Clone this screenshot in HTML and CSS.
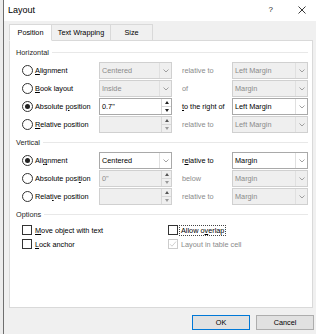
FILE: index.html
```html
<!DOCTYPE html>
<html lang="en">
<head>
    <meta charset="UTF-8">
    <meta name="viewport" content="width=device-width, initial-scale=1.0">
    <title>Layout</title>
    <link rel="stylesheet" href="styles.css">
</head>
<body>

    <div class="dialog">
        <div class="titlebar">
            <span class="title">Layout</span>
            <span class="help">?</span>
            <span class="close">
                <svg width="8" height="8" viewBox="0 0 8 8"><path d="M0.5 0.5 L7.5 7.5 M7.5 0.5 L0.5 7.5" stroke="#222" stroke-width="0.9" fill="none"/></svg>
            </span>
        </div>

        <div class="tabs">
            <span class="tab active">Position</span>
            <span class="tab wrap">Text Wrapping</span>
            <span class="tab size">Size</span>
        </div>

        <div class="panel">
            <div class="group-label">Horizontal</div>
            <div class="rows">
                <div class="row">
                    <div class="option"><span class="radio"></span><span><u>A</u>lignment</span></div>
                    <div class="combo disabled"><span class="value">Centered</span><span class="arrow"><svg width="6" height="4" viewBox="0 0 6 4"><path d="M0.5 0.5 L3 3 L5.5 0.5" stroke="#8a8a8a" stroke-width="0.8" fill="none"/></svg></span></div>
                    <span class="mid muted">relative to</span>
                    <div class="combo disabled"><span class="value">Left Margin</span><span class="arrow"><svg width="6" height="4" viewBox="0 0 6 4"><path d="M0.5 0.5 L3 3 L5.5 0.5" stroke="#8a8a8a" stroke-width="0.8" fill="none"/></svg></span></div>
                </div>
                <div class="row">
                    <div class="option"><span class="radio"></span><span><u>B</u>ook layout</span></div>
                    <div class="combo disabled"><span class="value">Inside</span><span class="arrow"><svg width="6" height="4" viewBox="0 0 6 4"><path d="M0.5 0.5 L3 3 L5.5 0.5" stroke="#8a8a8a" stroke-width="0.8" fill="none"/></svg></span></div>
                    <span class="mid muted">of</span>
                    <div class="combo disabled"><span class="value">Margin</span><span class="arrow"><svg width="6" height="4" viewBox="0 0 6 4"><path d="M0.5 0.5 L3 3 L5.5 0.5" stroke="#8a8a8a" stroke-width="0.8" fill="none"/></svg></span></div>
                </div>
                <div class="row">
                    <div class="option"><span class="radio checked"></span><span>Absolute <u>p</u>osition</span></div>
                    <div class="spin"><span class="value">0.7"</span><span class="spin-btns"><span class="up"></span><span class="down"></span></span></div>
                    <span class="mid"><u>t</u>o the right of</span>
                    <div class="combo"><span class="value">Left Margin</span><span class="arrow"><svg width="6" height="4" viewBox="0 0 6 4"><path d="M0.5 0.5 L3 3 L5.5 0.5" stroke="#8a8a8a" stroke-width="0.8" fill="none"/></svg></span></div>
                </div>
                <div class="row">
                    <div class="option"><span class="radio"></span><span><u>R</u>elative position</span></div>
                    <div class="spin disabled"><span class="value"></span><span class="spin-btns"><span class="up"></span><span class="down"></span></span></div>
                    <span class="mid muted">relative to</span>
                    <div class="combo disabled"><span class="value">Left Margin</span><span class="arrow"><svg width="6" height="4" viewBox="0 0 6 4"><path d="M0.5 0.5 L3 3 L5.5 0.5" stroke="#8a8a8a" stroke-width="0.8" fill="none"/></svg></span></div>
                </div>
            </div>

            <div class="group-label">Vertical</div>
            <div class="rows">
                <div class="row">
                    <div class="option"><span class="radio checked"></span><span>Ali<u>g</u>nment</span></div>
                    <div class="combo"><span class="value">Centered</span><span class="arrow"><svg width="6" height="4" viewBox="0 0 6 4"><path d="M0.5 0.5 L3 3 L5.5 0.5" stroke="#8a8a8a" stroke-width="0.8" fill="none"/></svg></span></div>
                    <span class="mid">r<u>e</u>lative to</span>
                    <div class="combo"><span class="value">Margin</span><span class="arrow"><svg width="6" height="4" viewBox="0 0 6 4"><path d="M0.5 0.5 L3 3 L5.5 0.5" stroke="#8a8a8a" stroke-width="0.8" fill="none"/></svg></span></div>
                </div>
                <div class="row">
                    <div class="option"><span class="radio"></span><span>Absolute posi<u>t</u>ion</span></div>
                    <div class="spin disabled"><span class="value">0"</span><span class="spin-btns"><span class="up"></span><span class="down"></span></span></div>
                    <span class="mid muted">below</span>
                    <div class="combo disabled"><span class="value">Margin</span><span class="arrow"><svg width="6" height="4" viewBox="0 0 6 4"><path d="M0.5 0.5 L3 3 L5.5 0.5" stroke="#8a8a8a" stroke-width="0.8" fill="none"/></svg></span></div>
                </div>
                <div class="row">
                    <div class="option"><span class="radio"></span><span>Relat<u>i</u>ve position</span></div>
                    <div class="spin disabled"><span class="value"></span><span class="spin-btns"><span class="up"></span><span class="down"></span></span></div>
                    <span class="mid muted">relative to</span>
                    <div class="combo disabled"><span class="value">Margin</span><span class="arrow"><svg width="6" height="4" viewBox="0 0 6 4"><path d="M0.5 0.5 L3 3 L5.5 0.5" stroke="#8a8a8a" stroke-width="0.8" fill="none"/></svg></span></div>
                </div>
            </div>

            <div class="group-label options-label">Options</div>
            <div class="checks">
                <div class="check-item"><span class="box"></span><span><u>M</u>ove object with text</span></div>
                <div class="check-item"><span class="box"></span><span class="focus">Allow o<u>v</u>erlap</span></div>
                <div class="check-item"><span class="box"></span><span><u>L</u>ock anchor</span></div>
                <div class="check-item muted"><span class="box disabled"><svg width="8" height="8" viewBox="0 0 8 8"><path d="M1 4.2 L3 6.2 L7 1.6" stroke="#c4c4c4" stroke-width="0.8" fill="none"/></svg></span><span>Layout in table cell</span></div>
            </div>
        </div>

        <div class="buttons">
            <span class="btn default">OK</span>
            <span class="btn">Cancel</span>
        </div>
    </div>

</body>
</html>
```

FILE: styles.css
```css
html, body {
    margin: 0;
    padding: 0;
    height: 100%;
    overflow: hidden;
}

body {
    background: #ececec;
    font-family: "Liberation Sans", Arial, sans-serif;
    font-size: 7.3px;
    color: #000;
}

.dialog {
    margin-left: 3px;
    height: 100%;
    border-left: 1px solid #6f6f6f;
    background: #f0f0f0;
}

.titlebar {
    height: 21px;
    background: #fff;
    display: flex;
    align-items: center;
    padding: 0 10px 0 4px;
}

.title {
    flex: 1;
    font-size: 9px;
    margin-top: -2px;
}

.help {
    font-size: 8px;
    color: #222;
    margin-right: 25px;
    margin-top: -2px;
}

.close {
    display: flex;
    margin-top: -2px;
}

.tabs {
    display: flex;
    margin: 3px 0 -1px 5px;
    position: relative;
    z-index: 1;
}

.tab {
    box-sizing: border-box;
    height: 17px;
    line-height: 16px;
    padding: 0;
    border: 1px solid #d9d9d9;
    border-left: none;
    text-align: center;
    white-space: nowrap;
    background: #f0f0f0;
}

.tab.active {
    background: #fff;
    border-left: 1px solid #d9d9d9;
    border-bottom-color: #fff;
    width: 43px;
}

.tab.wrap {
    width: 59px;
}

.tab.size {
    width: 42px;
}

.panel {
    box-sizing: border-box;
    margin-left: 5px;
    width: 304px;
    height: 268px;
    background: #fff;
    border: 1px solid #d9d9d9;
    padding: 6px 4px 0 6px;
}

.group-label {
    display: flex;
    align-items: center;
    height: 11px;
    margin-bottom: 4px;
    color: #1e1e1e;
}

.group-label::after {
    content: "";
    flex: 1;
    height: 1px;
    background: #e8e8e8;
    margin-left: 3px;
}

.rows {
    display: flex;
    flex-direction: column;
    gap: 1px;
    margin-left: 6px;
    margin-bottom: 4px;
}

.row {
    display: grid;
    grid-template-columns: 77px 73px 60px 76px;
    height: 17px;
    align-items: center;
}

.option {
    display: flex;
    align-items: center;
    white-space: nowrap;
}

.radio {
    box-sizing: border-box;
    width: 11px;
    height: 11px;
    border: 1px solid #333;
    border-radius: 50%;
    margin-right: 2px;
    display: flex;
    align-items: center;
    justify-content: center;
}

.radio.checked::after {
    content: "";
    width: 5px;
    height: 5px;
    border-radius: 50%;
    background: #222;
}

.combo, .spin {
    box-sizing: border-box;
    height: 17px;
    display: flex;
    border: 1px solid #a9a9a9;
    background: #fff;
}

.combo.disabled, .spin.disabled {
    border-color: #d0d0d0;
    background: #efefef;
    color: #8a8a8a;
}

.value {
    flex: 1;
    padding-left: 2px;
    line-height: 15px;
    white-space: nowrap;
    overflow: hidden;
}

.arrow {
    width: 11px;
    border-left: 1px solid #e0e0e0;
    display: flex;
    align-items: center;
    justify-content: center;
}

.spin-btns {
    width: 9px;
    border-left: 1px solid #d8d8d8;
    display: flex;
    flex-direction: column;
}

.spin-btns span {
    flex: 1;
    display: flex;
    align-items: center;
    justify-content: center;
}

.spin-btns .up {
    border-bottom: 1px solid #d8d8d8;
}

.spin-btns .up::after {
    content: "";
    border-left: 2.5px solid transparent;
    border-right: 2.5px solid transparent;
    border-bottom: 3px solid #222;
}

.spin-btns .down::after {
    content: "";
    border-left: 2.5px solid transparent;
    border-right: 2.5px solid transparent;
    border-top: 3px solid #222;
}

.spin.disabled .up::after {
    border-bottom-color: #555;
}

.spin.disabled .down::after {
    border-top-color: #9a9a9a;
}

.mid {
    padding-left: 10px;
    white-space: nowrap;
}

.muted {
    color: #8a8a8a;
}

.options-label {
    margin-top: 1px;
    margin-bottom: 3px;
}

.checks {
    display: grid;
    grid-template-columns: 146px 1fr;
    grid-auto-rows: 14px;
    margin-left: 6px;
    align-items: center;
}

.check-item {
    display: flex;
    align-items: center;
}

.box {
    box-sizing: border-box;
    width: 10px;
    height: 10px;
    border: 1px solid #333;
    margin-right: 3px;
    display: flex;
    align-items: center;
    justify-content: center;
}

.box.disabled {
    border-color: #cccccc;
}

.focus {
    outline: 1px dotted #444;
    outline-offset: 0;
    padding: 0 1px;
    margin-left: -1px;
}

.buttons {
    display: flex;
    justify-content: flex-end;
    gap: 6px;
    margin-top: 7px;
    padding-right: 2px;
}

.btn {
    box-sizing: border-box;
    width: 58px;
    height: 15px;
    line-height: 13px;
    text-align: center;
    background: #e1e1e1;
    border: 1px solid #adadad;
}

.btn.default {
    border-color: #0078d7;
}
```
